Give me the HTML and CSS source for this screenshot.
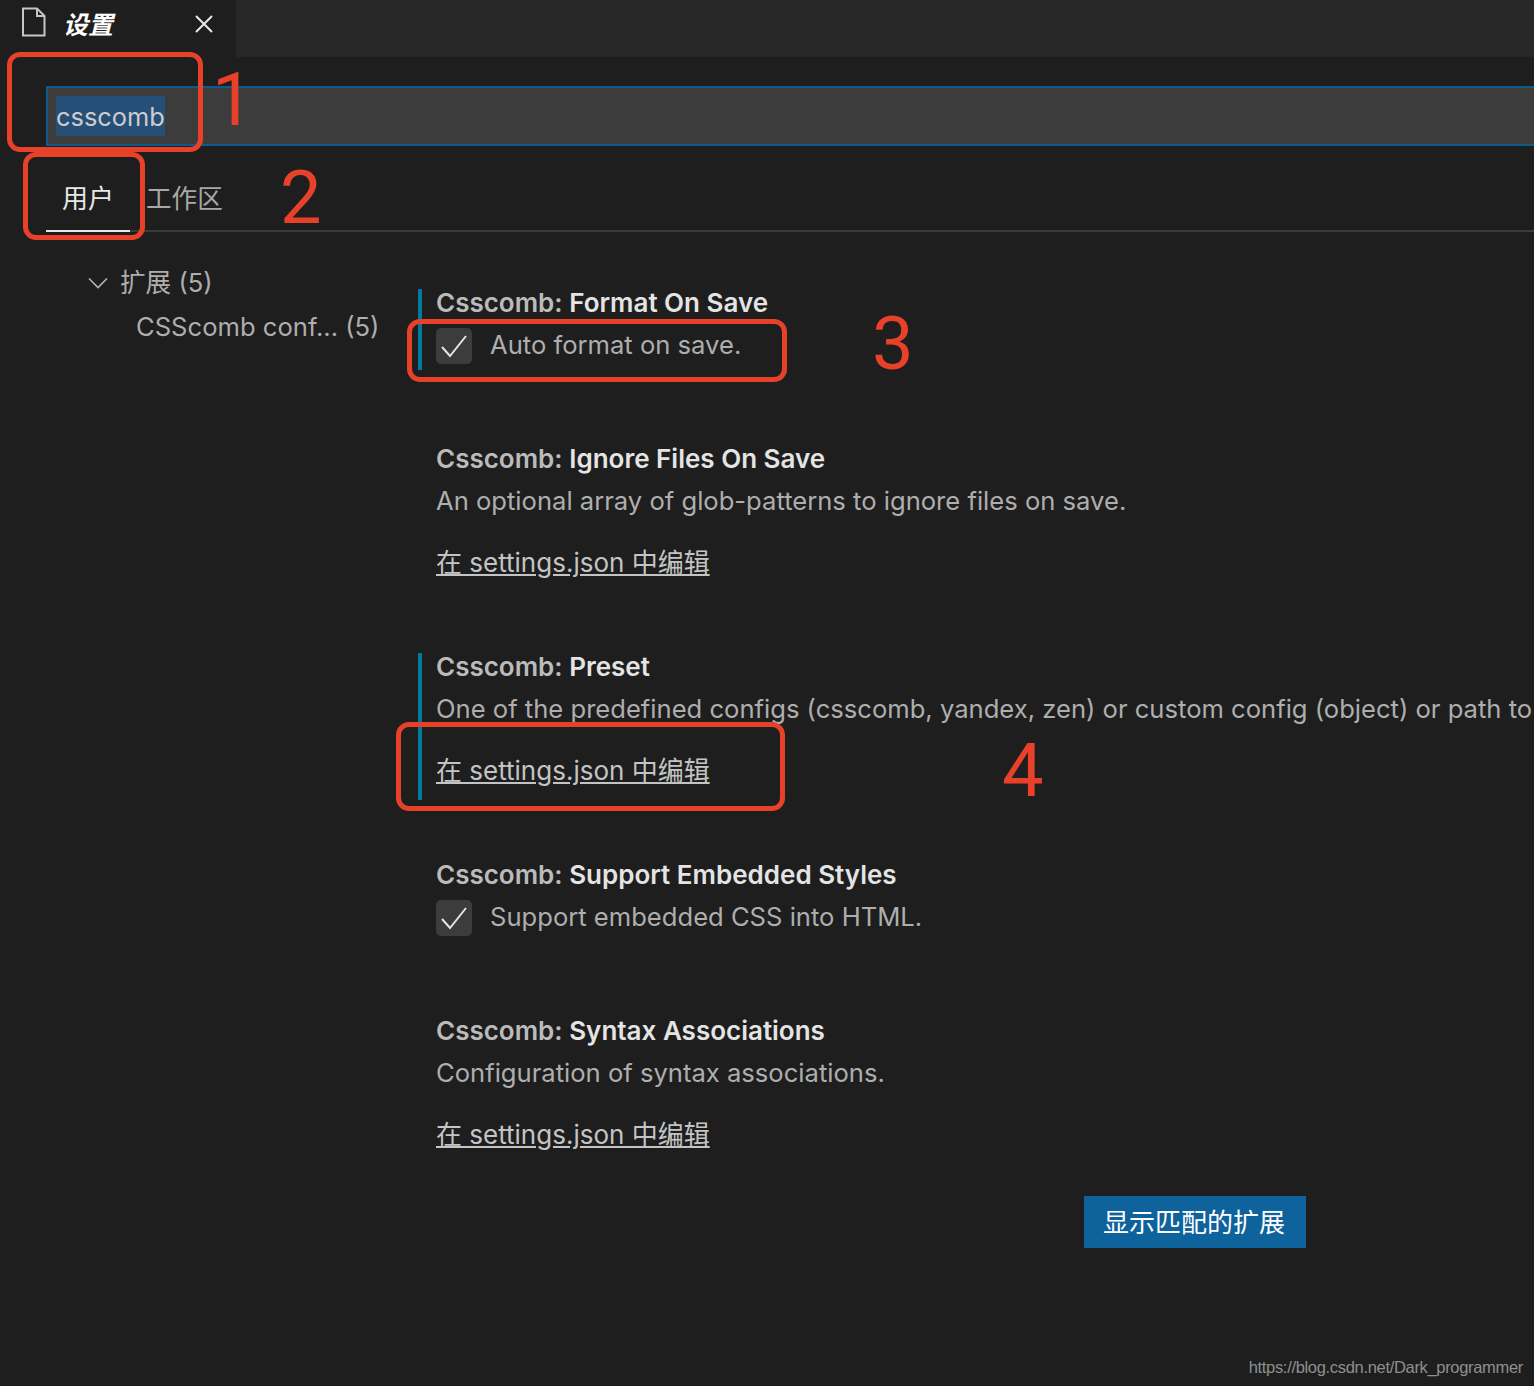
FILE: index.html
```html
<!DOCTYPE html>
<html lang="zh-CN">
<head>
    <meta charset="UTF-8">
    <meta name="viewport" content="width=device-width, initial-scale=1.0">
    <title>设置</title>
    <link rel="stylesheet" href="styles.css">
</head>
<body>
    <div class="tab-bar">
        <div class="editor-tab">
            <svg class="file-icon" width="24" height="30" viewBox="0 0 24 30" fill="none" stroke="#c5c5c5" stroke-width="2">
                <path d="M1 1.5H15L22.5 9V28.5H1Z"/>
                <path d="M15 1.5V9H22.5"/>
            </svg>
            <span class="editor-tab-title">设置</span>
            <svg class="close-icon" width="20" height="20" viewBox="0 0 20 20" fill="none" stroke="#e8e8e8" stroke-width="2">
                <path d="M2 2L18 18M18 2L2 18"/>
            </svg>
        </div>
    </div>

    <div class="search-box"><span class="search-text">csscomb</span></div>

    <div class="scope-tabs">
        <div class="scope-tab active">用户</div>
        <div class="scope-tab">工作区</div>
    </div>

    <div class="settings-body">
        <div class="tree">
            <div class="tree-row">
                <svg class="chevron" width="20" height="12" viewBox="0 0 20 12" fill="none" stroke="#b5b5b5" stroke-width="1.6">
                    <path d="M1 1.5L10 10.5L19 1.5"/>
                </svg>
                扩展 (5)
            </div>
            <div class="tree-row child">CSScomb conf... (5)</div>
        </div>

        <div class="settings-list">
            <div class="setting check-row modified">
                <div class="setting-title">Csscomb: <b>Format On Save</b></div>
                <div class="setting-check">
                    <span class="checkbox"><svg width="28" height="26" viewBox="0 0 28 26" fill="none" stroke="#e6e6e6" stroke-width="2"><path d="M2 14L10 23L26 3"/></svg></span>
                    <span class="check-label">Auto format on save.</span>
                </div>
            </div>

            <div class="setting link-row">
                <div class="setting-title">Csscomb: <b>Ignore Files On Save</b></div>
                <div class="setting-desc">An optional array of glob-patterns to ignore files on save.</div>
                <a class="setting-link" href="#">在 settings.json 中编辑</a>
            </div>

            <div class="setting link-row modified">
                <div class="setting-title">Csscomb: <b>Preset</b></div>
                <div class="setting-desc">One of the predefined configs (csscomb, yandex, zen) or custom config (object) or path to</div>
                <a class="setting-link" href="#">在 settings.json 中编辑</a>
            </div>

            <div class="setting check-row">
                <div class="setting-title">Csscomb: <b>Support Embedded Styles</b></div>
                <div class="setting-check">
                    <span class="checkbox"><svg width="28" height="26" viewBox="0 0 28 26" fill="none" stroke="#e6e6e6" stroke-width="2"><path d="M2 14L10 23L26 3"/></svg></span>
                    <span class="check-label">Support embedded CSS into HTML.</span>
                </div>
            </div>

            <div class="setting link-row last">
                <div class="setting-title">Csscomb: <b>Syntax Associations</b></div>
                <div class="setting-desc">Configuration of syntax associations.</div>
                <a class="setting-link" href="#">在 settings.json 中编辑</a>
            </div>

            <button class="ext-button">显示匹配的扩展</button>
        </div>
    </div>

    <!-- red annotations drawn over the screenshot -->
    <div class="note-box box-1"></div>
    <div class="note-box box-2"></div>
    <div class="note-box box-3"></div>
    <div class="note-box box-4"></div>
    <div class="note-num num-1">1</div>
    <div class="note-num num-2">2</div>
    <div class="note-num num-3">3</div>
    <div class="note-num num-4">4</div>

    <div class="watermark">https://blog.csdn.net/Dark_programmer</div>
</body>
</html>
```

FILE: styles.css
```css
body {
    margin: 0;
    padding: 0;
    position: relative;
    height: 1386px;
    overflow: hidden;
    background: #1e1e1e;
    color: #aeaeae;
    font-family: Inter, "Noto Sans CJK SC", sans-serif;
    font-size: 25.6px;
}

.tab-bar {
    height: 57px;
    background: #272727;
    margin-bottom: 29px;
}

.editor-tab {
    width: 236px;
    height: 100%;
    background: #1e1e1e;
    position: relative;
    display: flex;
    align-items: flex-start;
}

.file-icon {
    margin: 7px 0 0 22px;
}

.editor-tab-title {
    margin: 7px 0 0 17px;
    color: #ffffff;
    font-size: 25px;
    line-height: 36px;
    font-style: italic;
    font-weight: 700;
}

.close-icon {
    margin: 14px 0 0 81px;
}

.search-box {
    margin-left: 46px;
    height: 60px;
    box-sizing: border-box;
    padding: 8px 0 0 8px;
    background: #3c3c3c;
    border: 2px solid #0e5a8a;
    border-right: none;
}

.search-text {
    display: block;
    width: max-content;
    height: 40px;
    line-height: 42px;
    background: #264f78;
    color: #cccccc;
    font-size: 25.4px;
}

.scope-tabs {
    margin-left: 46px;
    height: 86px;
    box-sizing: border-box;
    border-bottom: 2px solid #3a3a3a;
    display: flex;
    gap: 16px;
}

.scope-tab {
    height: 86px;
    box-sizing: border-box;
    line-height: 106px;
    font-size: 25.6px;
    color: #a8a8a8;
}

.scope-tab.active {
    width: 84px;
    text-align: center;
    font-size: 26px;
    color: #e8e8e8;
    border-bottom: 2px solid #e8e8e8;
}

.settings-body {
    display: flex;
}

.tree {
    width: 418px;
    flex-shrink: 0;
    box-sizing: border-box;
    padding: 37px 0 0 88px;
}

.tree-row {
    height: 28px;
    line-height: 28px;
    margin-bottom: 16px;
    white-space: nowrap;
    display: flex;
    align-items: center;
    gap: 12px;
}

.tree-row.child {
    margin-left: 48px;
}

.settings-list {
    padding-top: 57px;
    flex: 1;
    min-width: 0;
}

.setting {
    box-sizing: border-box;
    padding-left: 14px;
    border-left: 4px solid transparent;
    white-space: nowrap;
}

.setting.modified {
    border-left-color: #007a9e;
}

.check-row {
    height: 81px;
    margin-bottom: 75px;
}

.link-row {
    height: 147px;
    margin-bottom: 61px;
}

.link-row.last {
    margin-bottom: 32px;
}

.setting-title {
    height: 28px;
    line-height: 28px;
    color: #bbbbbb;
    font-size: 26px;
    font-weight: 600;
}

.setting-title b {
    color: #e4e4e4;
    font-weight: 600;
}

.setting-desc {
    margin-top: 14px;
    height: 28px;
    line-height: 28px;
}

.setting-check {
    margin-top: 11px;
    display: flex;
    align-items: center;
    gap: 18px;
    height: 36px;
}

.check-label {
    margin-bottom: 3px;
}

.checkbox {
    width: 36px;
    height: 36px;
    background: #3c3c3c;
    border-radius: 5px;
    display: flex;
    align-items: center;
    justify-content: center;
}

.setting-link {
    display: block;
    width: max-content;
    margin-top: 34px;
    height: 28px;
    line-height: 28px;
    font-size: 26px;
    color: #c4c4c4;
}

.ext-button {
    display: block;
    margin-left: 666px;
    width: 222px;
    height: 52px;
    border: none;
    padding: 0 2px 4px 0;
    background: #0e639c;
    color: #ffffff;
    font-family: Inter, "Noto Sans CJK SC", sans-serif;
    font-size: 26px;
}

.note-box {
    position: absolute;
    box-sizing: border-box;
    border: 5px solid #e8412a;
    border-radius: 13px;
}

.box-1 { left: 7px; top: 52px; width: 196px; height: 100px; }
.box-2 { left: 23px; top: 152px; width: 122px; height: 88px; }
.box-3 { left: 407px; top: 319px; width: 380px; height: 63px; }
.box-4 { left: 396px; top: 722px; width: 389px; height: 89px; }

.note-num {
    position: absolute;
    color: #e8412a;
    font-family: Roboto, sans-serif;
    font-weight: 400;
    font-size: 74px;
    line-height: 74px;
}

.num-1 { left: 212px; top: 63px; }
.num-2 { left: 280px; top: 161px; }
.num-3 { left: 872px; top: 307px; }
.num-4 { left: 1002px; top: 734px; }

.watermark {
    position: absolute;
    right: 11px;
    bottom: 9px;
    color: #8f8f8f;
    font-family: "Liberation Sans", sans-serif;
    font-size: 16.5px;
    letter-spacing: -0.32px;
    line-height: 20px;
}
```
